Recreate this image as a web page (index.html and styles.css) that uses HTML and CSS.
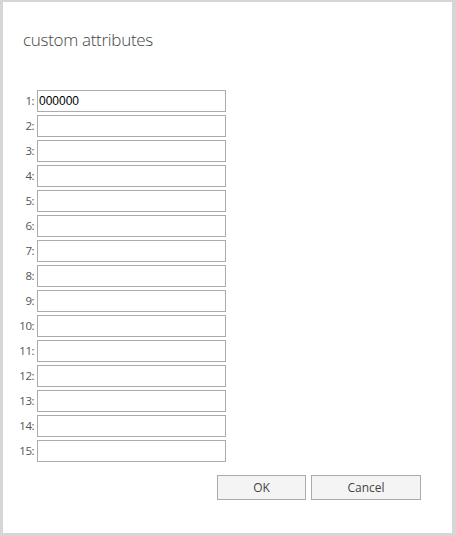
FILE: index.html
```html
<!DOCTYPE html>
<html>
<head>
<meta charset="utf-8">
<link rel="stylesheet" href="styles.css">
</head>
<body>
<div class="dialog">
  <h1 class="title">custom attributes</h1>
  <div class="rows">
    <div class="row"><span class="lbl">1:</span><input class="field" type="text" value="000000"></div>
    <div class="row"><span class="lbl">2:</span><input class="field" type="text"></div>
    <div class="row"><span class="lbl">3:</span><input class="field" type="text"></div>
    <div class="row"><span class="lbl">4:</span><input class="field" type="text"></div>
    <div class="row"><span class="lbl">5:</span><input class="field" type="text"></div>
    <div class="row"><span class="lbl">6:</span><input class="field" type="text"></div>
    <div class="row"><span class="lbl">7:</span><input class="field" type="text"></div>
    <div class="row"><span class="lbl">8:</span><input class="field" type="text"></div>
    <div class="row"><span class="lbl">9:</span><input class="field" type="text"></div>
    <div class="row"><span class="lbl">10:</span><input class="field" type="text"></div>
    <div class="row"><span class="lbl">11:</span><input class="field" type="text"></div>
    <div class="row"><span class="lbl">12:</span><input class="field" type="text"></div>
    <div class="row"><span class="lbl">13:</span><input class="field" type="text"></div>
    <div class="row"><span class="lbl">14:</span><input class="field" type="text"></div>
    <div class="row"><span class="lbl">15:</span><input class="field" type="text"></div>
  </div>
  <div class="actions">
    <button class="btn btn-ok" type="button">OK</button>
    <button class="btn btn-cancel" type="button">Cancel</button>
  </div>
</div>
</body>
</html>
```

FILE: styles.css
```css
html, body {
  margin: 0;
  padding: 0;
  background: #ffffff;
}
body {
  font-family: "Open Sans", "Liberation Sans", sans-serif;
  color: #444444;
}
.dialog {
  box-sizing: border-box;
  width: 456px;
  height: 536px;
  background: #ffffff;
  border-style: solid;
  border-color: #d6d6d6;
  border-width: 2px 4px 3px 3px;
}
.title {
  margin: 0;
  padding: 26px 0 0 20px;
  font-size: 17px;
  font-weight: 300;
  line-height: 24px;
  color: #444444;
  letter-spacing: -0.3px;
}
.rows {
  margin-top: 38px;
  display: flex;
  flex-direction: column;
  gap: 3px;
  padding-left: 13px;
}
.row {
  display: flex;
  align-items: center;
  height: 22px;
}
.lbl {
  width: 18px;
  text-align: right;
  font-size: 11.5px;
  line-height: 14px;
  padding-bottom: 1px;
  color: #555555;
  margin-right: 3px;
  letter-spacing: -0.5px;
}
.field {
  box-sizing: border-box;
  width: 189px;
  height: 22px;
  margin: 0;
  padding: 0 1px;
  border: 1px solid #ababab;
  background: #ffffff;
  font-family: "Liberation Sans", Arial, sans-serif;
  font-size: 12px;
  color: #000000;
  outline: none;
}
.actions {
  display: flex;
  justify-content: flex-end;
  gap: 5px;
  margin-top: 13px;
  padding-right: 31px;
}
.btn {
  box-sizing: border-box;
  height: 25px;
  margin: 0;
  padding: 0;
  border: 1px solid #ababab;
  background: #f4f4f4;
  font-family: "Open Sans", "Liberation Sans", sans-serif;
  font-size: 12px;
  color: #444444;
}
.btn-ok {
  width: 89px;
}
.btn-cancel {
  width: 110px;
}
```
